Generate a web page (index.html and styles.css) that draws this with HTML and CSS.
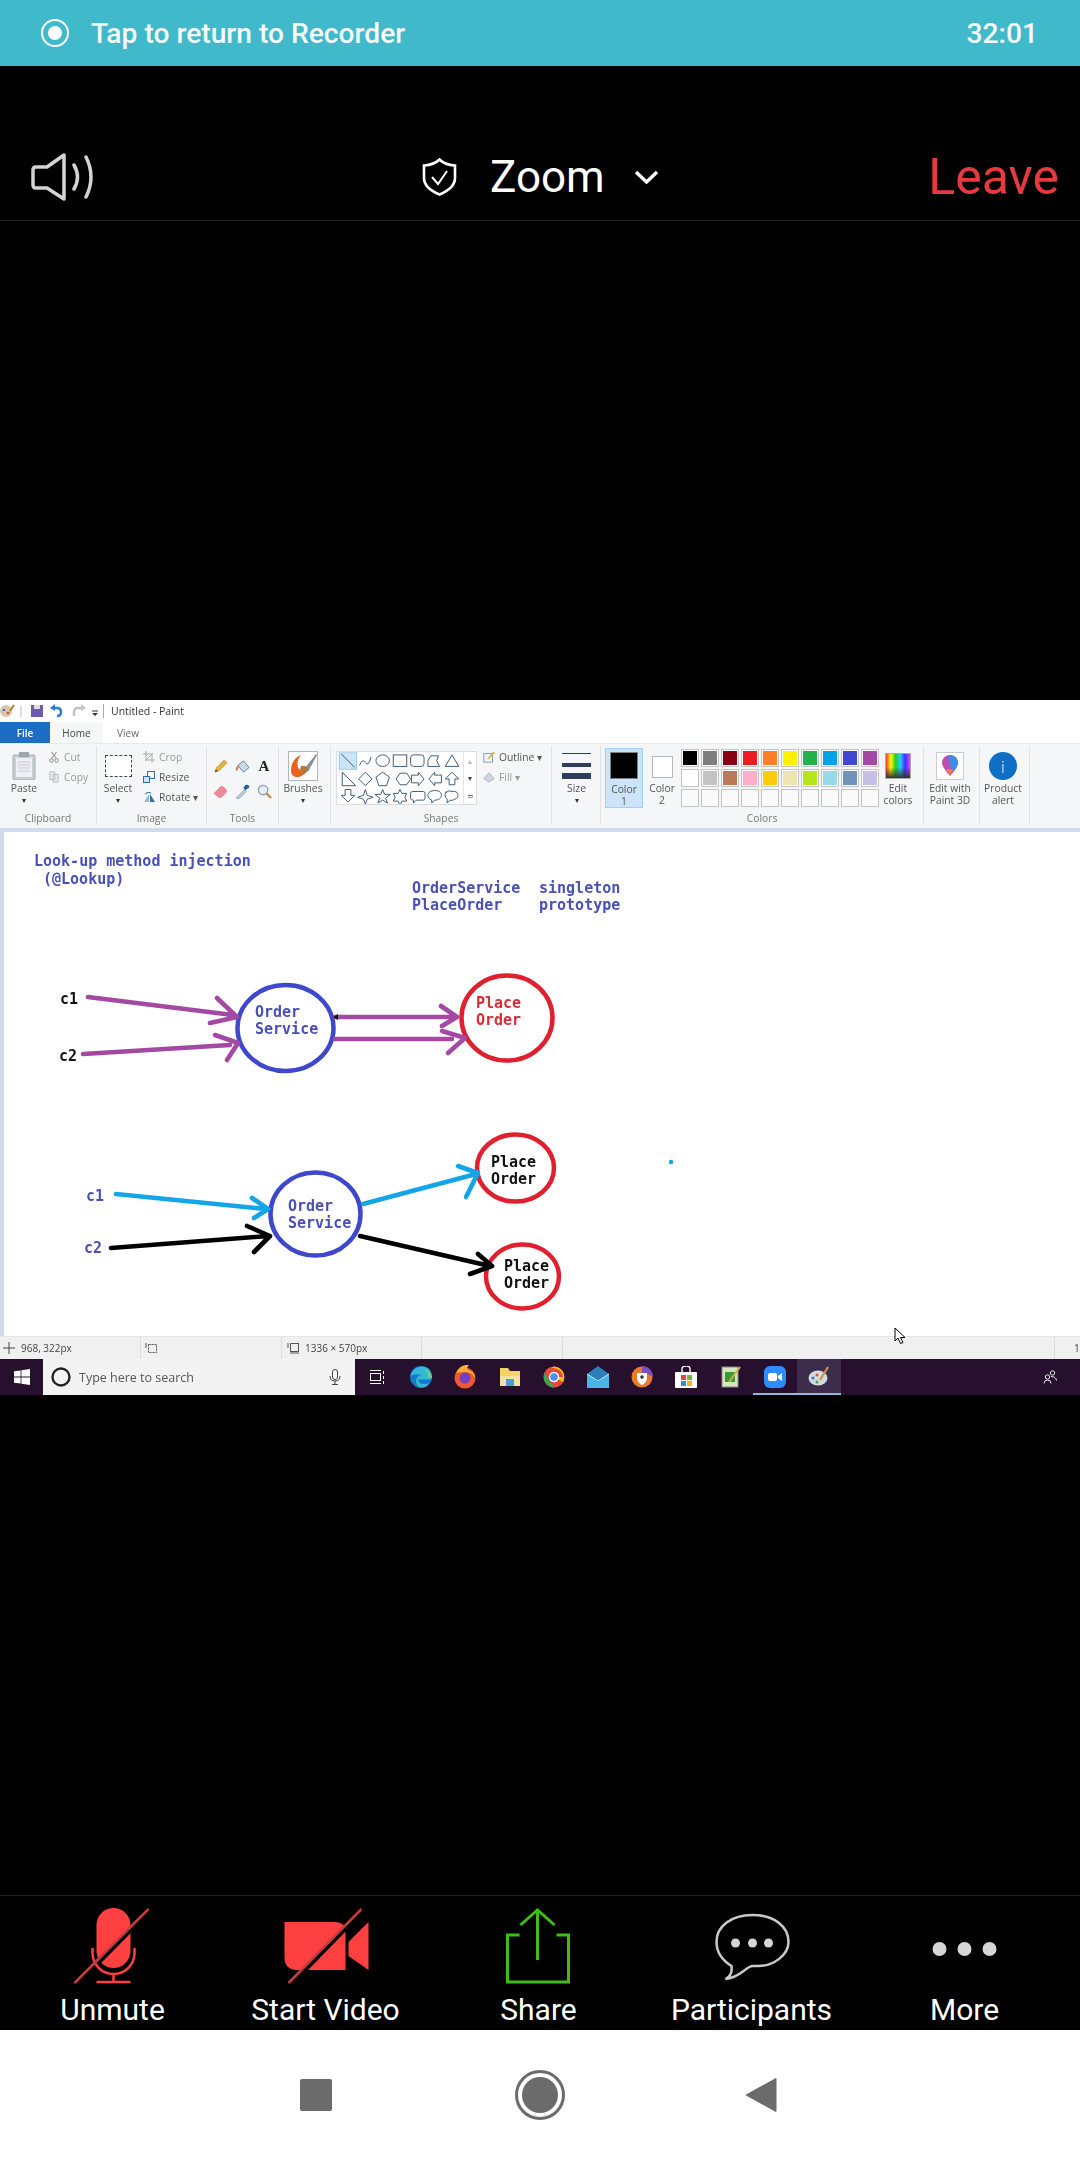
FILE: index.html
```html
<!DOCTYPE html>
<html lang="en">
<head>
<meta charset="utf-8">
<title>Zoom meeting</title>
<link rel="stylesheet" href="styles.css">
</head>
<body>
<div class="app">
  <div class="recorder-bar">
    <svg class="rec-icon" viewBox="0 0 28 28"><circle cx="14" cy="14" r="13" fill="none" stroke="#fff" stroke-width="2"/><circle cx="14" cy="14" r="7" fill="#fff"/></svg>
    <span class="rec-text">Tap to return to Recorder</span>
    <span class="rec-time">32:01</span>
  </div>

  <header class="meeting-head">
    <svg class="speaker" viewBox="0 0 63 48"><path d="M2 17q0-3 3-3h11L33 2v44L16 35H5q-3 0-3-3z" fill="none" stroke="#d4d4d4" stroke-width="3.500" stroke-linejoin="round"/><path d="M43 12q7 12 0 24M55 4q10 20 0 40" fill="none" stroke="#d4d4d4" stroke-width="3.500" stroke-linecap="round"/></svg>
    <div class="title">
      <svg class="shield" viewBox="0 0 35 38"><path d="M17.500 1.500C21 5 26 7 33 7.500V20C33 28 26 33 17.500 36.500 9 33 2 28 2 20V7.500C9 7 14 5 17.500 1.500z" fill="none" stroke="#fff" stroke-width="2.600"/><path d="M10 19l6 7 9-13" fill="none" stroke="#fff" stroke-width="2"/></svg>
      <span class="title-text">Zoom</span>
      <svg class="chev" viewBox="0 0 25 14"><path d="M2 2l10.500 10L23 2" fill="none" stroke="#fff" stroke-width="3.400"/></svg>
    </div>
    <span class="leave">Leave</span>
  </header>

  <main class="stage">
    <section class="paint">
      <div class="p-title">
        <svg class="qa" width="70" height="16" viewBox="0 0 70 16"><circle cx="6" cy="8" r="6" fill="#d9c7a8"/><circle cx="4" cy="7" r="1.300" fill="#3a7bd0"/><circle cx="8" cy="10" r="1.300" fill="#d04a3a"/><path d="M10 8l4-6" stroke="#b07a3a" stroke-width="2"/><path d="M21 3v11" stroke="#bbb"/><rect x="31" y="2" width="12" height="12" fill="#6d5bb0"/><rect x="34" y="2" width="6" height="4" fill="#ddd"/><path d="M52 5h5q4 0 4 4t-4 4" fill="none" stroke="#2b7cd3" stroke-width="2.500"/><path d="M55 1l-5 4 5 3z" fill="#2b7cd3"/></svg>
        <svg width="28" height="16" viewBox="0 0 28 16"><path d="M14 5H8q-4 0-4 4v4" fill="none" stroke="#c4c4c4" stroke-width="2.500"/><path d="M11 1l5 4-5 3z" fill="#c4c4c4"/><path d="M22 8h6" stroke="#333"/><path d="M22 10h6l-3 3z" fill="#333"/></svg>
        <span class="p-sep"></span>
        <span class="p-name">Untitled - Paint</span>
      </div>
      <div class="p-tabs">
        <span class="tab tab-file">File</span>
        <span class="tab tab-home">Home</span>
        <span class="tab tab-view">View</span>
      </div>
      <div class="ribbon">
        <div class="group g-clip">
          <div class="g-body">
            <div class="big w48">
              <div class="big-icon"><svg width="24" height="28" viewBox="0 0 24 28"><rect x="1" y="3" width="22" height="25" rx="1" fill="#c7ced6" stroke="#a9b0b8"/><rect x="4" y="6" width="16" height="19" fill="#eef0f3"/><path d="M6 10h12M6 13h12M6 16h12M6 19h12" stroke="#c2c8d0"/><rect x="7" y="0" width="10" height="5" fill="#9ea5ad"/></svg></div>
              <span class="lbl">Paste</span><span class="drop">▾</span>
            </div>
            <div class="rows">
              <div class="row off"><svg class="ri" viewBox="0 0 12 14"><path d="M3 1l6 8M9 1L3 9" stroke="#9a9a9a" stroke-width="1.300" fill="none"/><circle cx="3" cy="11" r="2" fill="none" stroke="#9a9a9a" stroke-width="1.200"/><circle cx="9" cy="11" r="2" fill="none" stroke="#9a9a9a" stroke-width="1.200"/></svg>Cut</div>
              <div class="row off"><svg class="ri" viewBox="0 0 12 14"><path d="M1 1h6v9H1zM5 4h6v9H5z" fill="#e6e6e6" stroke="#b9b9b9"/></svg>Copy</div>
            </div>
          </div>
          <div class="g-label">Clipboard</div>
        </div>
        <div class="group g-image">
          <div class="g-body">
            <div class="big w42">
              <div class="big-icon"><span class="select-box"></span></div>
              <span class="lbl">Select</span><span class="drop">▾</span>
            </div>
            <div class="rows rows-pad">
              <div class="row off"><svg class="ri" viewBox="0 0 12 12"><path d="M3 0v9h9M0 3h9v9" fill="none" stroke="#a9a9a9"/><path d="M2 10L10 2" stroke="#a9a9a9"/></svg>Crop</div>
              <div class="row"><svg class="ri" viewBox="0 0 12 12"><rect x="4.500" y="0.500" width="7" height="7" fill="#fff" stroke="#2d6fb0"/><rect x="0.500" y="5.500" width="6" height="6" fill="#cfe3f7" stroke="#2d6fb0"/></svg>Resize</div>
              <div class="row"><svg class="ri" viewBox="0 0 12 12"><path d="M6 3v8H1z" fill="#9fb4c8"/><path d="M7 3v8h5z" fill="#2d6fb0"/><path d="M2 3q3-3 6-1" fill="none" stroke="#2d6fb0"/></svg>Rotate ▾</div>
            </div>
          </div>
          <div class="g-label">Image</div>
        </div>
        <div class="group g-tools">
          <div class="g-body">
            <div class="tool-grid">
              <svg class="tg" viewBox="0 0 16 16"><path d="M2 14l2-5 8-8 3 3-8 8z" fill="#e8b33f" stroke="#a8782a" stroke-width=".6"/><path d="M2 14l1-3 2 2z" fill="#444"/></svg>
              <svg class="tg" viewBox="0 0 16 16"><path d="M3 7l6-5 6 7-6 5z" fill="#cfd8e4" stroke="#5e7fa3"/><path d="M4 6Q0 9 1 13q3-2 3-7z" fill="#e0703a"/></svg>
              <span class="tg-a">A</span>
              <svg class="tg" viewBox="0 0 16 16"><path d="M1 10l7-7q2-1 3 0l3 3q1 1 0 3l-5 5q-2 1-3 0z" fill="#ec8a9a" stroke="#c26a78" stroke-width=".5"/></svg>
              <svg class="tg" viewBox="0 0 16 16"><path d="M2 14l8-8 2 2-8 8H2z" fill="#bcd" stroke="#789" stroke-width=".6"/><path d="M9 4l2-3q3-1 4 1t-2 3l-2 2z" fill="#2a5f9e"/></svg>
              <svg class="tg" viewBox="0 0 16 16"><circle cx="6.500" cy="6.500" r="5" fill="#e6eef6" stroke="#8a9aaa" stroke-width="1.300"/><path d="M10 10l5 5" stroke="#c58f4a" stroke-width="2.400"/></svg>
            </div>
          </div>
          <div class="g-label">Tools</div>
        </div>
        <div class="group g-brush">
          <div class="g-body">
            <div class="big w48">
              <div class="big-icon"><svg width="30" height="30" viewBox="0 0 30 30"><rect x=".5" y=".5" width="29" height="29" fill="#fff" stroke="#b5b5b5"/><path d="M3 20Q3 8 13 4q-6 8-2 14 4 4 9 1-6 8-12 7-5-1-5-6z" fill="#e8641f"/><path d="M17 17L28 3l1 1-9 17z" fill="#8a8f96"/><path d="M13 15q5-1 7 3-1 5-6 5-3-4-1-8z" fill="#b07a3a"/></svg></div>
              <span class="lbl">Brushes</span><span class="drop">▾</span>
            </div>
          </div>
          <div class="g-label"></div>
        </div>
        <div class="group g-shapes">
          <div class="g-body">
            <div class="gallery">
              <svg class="gallery-svg" viewBox="0 0 126 54" fill="none" stroke="#3b5a76">
                <rect x="0" y="0" width="18" height="18" fill="#cce4f7" stroke="#9cc7ea"/>
                <path d="M2 2l14 14"/><path d="M21 14q3-8 6-3t6-6"/><ellipse cx="45" cy="9" rx="7" ry="6"/><rect x="56" y="3" width="14" height="12"/><rect x="74" y="3" width="14" height="12" rx="3"/><path d="M92 15V9l3-5h8l-2 5 3 6z"/><path d="M110 15l7-12 7 12z"/>
                <path d="M3 21v14h14z"/><path d="M27 21l7 7-7 7-7-7z"/><path d="M45 21l7 5-3 9h-8l-3-9z"/><path d="M59 28l4-6h7l4 6-4 6h-7z"/><path d="M75 24h7v-3l6 7-6 7v-3h-7z"/><path d="M106 24h-7v-3l-6 7 6 7v-3h7z"/><path d="M117 21l7 7h-4v6h-6v-6h-4z"/>
                <path d="M6 39h6v6h4l-7 7-7-7h4z"/><path d="M27 39l2 6 6 2-6 2-2 5-2-5-6-2 6-2z"/><path d="M45 39l2 5h6l-5 4 2 5-5-3-5 3 2-5-5-4h6z"/><path d="M63 39l2 4h5l-2 4 2 4h-5l-2 4-2-4h-5l2-4-2-4h5z"/><path d="M76 41h11q2 0 2 2v5q0 2-2 2h-7l-3 3v-3q-3 0-3-2v-5q0-2 2-2z"/><path d="M99 40c5 0 7 2 7 5s-3 5-7 5l-3 3v-3c-3-1-4-3-4-5 0-3 3-5 7-5z"/><path d="M111 42q3-3 6-1 5-1 6 3 1 4-3 5-3 2-5 1l-3 3v-4q-4-3-1-8z"/>
              </svg>
              <div class="gallery-scroll"><span>▴</span><span class="dark">▾</span><span class="dark">≂</span></div>
            </div>
            <div class="rows outline-rows">
              <div class="row"><svg class="ri" viewBox="0 0 14 14"><rect x="1" y="3" width="10" height="10" fill="none" stroke="#6c93b8"/><path d="M5 9l7-8 2 1-8 8z" fill="#e2a83a"/></svg>Outline ▾</div>
              <div class="row off"><svg class="ri" viewBox="0 0 14 14"><path d="M1 9l6-7 6 7-6 4z" fill="#cfd6de" stroke="#a9b3bd"/></svg>Fill ▾</div>
            </div>
          </div>
          <div class="g-label">Shapes</div>
        </div>
        <div class="group g-size">
          <div class="g-body">
            <div class="big w49">
              <div class="big-icon"><span class="size-lines"><i class="s1"></i><i class="s2"></i><i class="s3"></i></span></div>
              <span class="lbl">Size</span><span class="drop">▾</span>
            </div>
          </div>
          <div class="g-label"></div>
        </div>
        <div class="group g-colors">
          <div class="g-body">
            <div class="color-btn active">
              <span class="chip chip-black"></span>
              <span class="lbl">Color<br>1</span>
            </div>
            <div class="color-btn">
              <span class="chip-slot"><span class="chip chip-white"></span></span>
              <span class="lbl">Color<br>2</span>
            </div>
            <div class="palette">
              <i class="c-black"></i><i class="c-gray"></i><i class="c-maroon"></i><i class="c-red"></i><i class="c-orange"></i><i class="c-yellow"></i><i class="c-green"></i><i class="c-sky"></i><i class="c-indigo"></i><i class="c-purple"></i>
              <i class="c-white"></i><i class="c-silver"></i><i class="c-brown"></i><i class="c-pink"></i><i class="c-gold"></i><i class="c-cream"></i><i class="c-lime"></i><i class="c-aqua"></i><i class="c-steel"></i><i class="c-lav"></i>
              <i></i><i></i><i></i><i></i><i></i><i></i><i></i><i></i><i></i><i></i>
            </div>
            <div class="big w38">
              <div class="big-icon"><span class="spectrum"></span></div>
              <span class="lbl">Edit<br>colors</span>
            </div>
          </div>
          <div class="g-label">Colors</div>
        </div>
        <div class="group g-p3d">
          <div class="g-body">
            <div class="big w52">
              <div class="big-icon"><svg width="28" height="28" viewBox="0 0 28 28"><rect x=".5" y=".5" width="27" height="27" fill="#fff" stroke="#ccc"/><path d="M14 24Q6 15 6 11a8 8 0 0 1 16 0q0 4-8 13z" fill="#c24bb0"/><path d="M14 3a8 8 0 0 1 8 8q0 3-4 8-5-4-6-15z" fill="#3f8fe0"/><path d="M14 24l-4-7h7z" fill="#e8833a"/></svg></div>
              <span class="lbl">Edit with<br>Paint 3D</span>
            </div>
          </div>
          <div class="g-label"></div>
        </div>
        <div class="group g-alert">
          <div class="g-body">
            <div class="big w46">
              <div class="big-icon"><span class="info">i</span></div>
              <span class="lbl">Product<br>alert</span>
            </div>
          </div>
          <div class="g-label"></div>
        </div>
      </div>
      <div class="canvas">
        <svg class="drawing" viewBox="4 832 1076 504" width="1076" height="504">
          <g class="t-blue">
            <text x="34" y="866">Look-up method injection</text>
            <text x="43" y="884">(@Lookup)</text>
            <text x="412" y="893">OrderService</text>
            <text x="412" y="910">PlaceOrder</text>
            <text x="539" y="893">singleton</text>
            <text x="539" y="910">prototype</text>
            <text x="255" y="1017">Order</text>
            <text x="255" y="1034">Service</text>
            <text x="86" y="1201">c1</text>
            <text x="84" y="1253">c2</text>
            <text x="288" y="1211">Order</text>
            <text x="288" y="1228">Service</text>
          </g>
          <g class="t-black">
            <text x="60" y="1004">c1</text>
            <text x="59" y="1061">c2</text>
            <text x="491" y="1167">Place</text>
            <text x="491" y="1184">Order</text>
            <text x="504" y="1271">Place</text>
            <text x="504" y="1288">Order</text>
          </g>
          <g class="t-red">
            <text x="476" y="1008">Place</text>
            <text x="476" y="1025">Order</text>
          </g>
          <g class="ring ring-blue">
            <ellipse cx="285.500" cy="1028" rx="48" ry="43"/>
            <ellipse cx="315.500" cy="1214" rx="45" ry="41.500"/>
          </g>
          <g class="ring ring-red">
            <ellipse cx="507" cy="1018" rx="45.500" ry="42.500"/>
            <ellipse cx="515.500" cy="1168" rx="38.500" ry="33.500"/>
            <ellipse cx="522.500" cy="1276.500" rx="36.500" ry="32"/>
          </g>
          <g class="pen pen-purple">
            <path d="M88 997L233 1015M217 998L237 1017 210 1023"/>
            <path d="M83 1054L230 1045M215 1035L238 1043 227 1060"/>
            <path d="M335 1017H455M441 1006L457 1017 442 1026"/>
            <path d="M335 1039H452M442 1031L465 1038 448 1053"/>
          </g>
          <path class="cursor-tip" d="M333 1017l5-3v6z"/>
          <g class="pen pen-sky">
            <path d="M116 1194L266 1209M252 1198L268 1209 254 1218"/>
            <path d="M363 1204L476 1174M458 1166L478 1173 466 1197"/>
          </g>
          <g class="pen pen-black">
            <path d="M111 1248L268 1236M247 1226L270 1236 254 1252"/>
            <path d="M360 1236L490 1266M478 1254L492 1266 470 1274"/>
          </g>
          <circle class="dot" cx="671" cy="1162" r="2.200"/>
        </svg>
      </div>
      <div class="p-status">
        <div class="st st1"><svg class="st-ic" viewBox="0 0 12 12"><path d="M6 0v12M0 6h12" stroke="#444"/></svg>968, 322px</div>
        <div class="st st2"><svg class="st-ic" viewBox="0 0 12 12"><rect x="3.500" y="2.500" width="8" height="8" fill="none" stroke="#555" stroke-dasharray="2 1"/><path d="M1 1v5" stroke="#555"/></svg></div>
        <div class="st st3"><svg class="st-ic" viewBox="0 0 12 12"><rect x="3.500" y="1.500" width="8" height="8" fill="none" stroke="#555"/><path d="M1 1v5M3 11h9" stroke="#555"/></svg>1336 × 570px</div>
        <div class="st st4"></div>
        <div class="st st5"></div>
        <div class="st st6">1</div>
      </div>
      <div class="taskbar">
        <div class="tb-start"><svg width="16" height="16" viewBox="0 0 16 16" fill="#fff"><path d="M0 2.300L6.600 1.400V7.600H0zM7.400 1.300L16 0V7.600H7.400zM0 8.400H6.600V14.600L0 13.700zM7.400 8.400H16V16L7.400 14.700z"/></svg></div>
        <div class="tb-search">
          <svg width="20" height="20" viewBox="0 0 20 20"><circle cx="10" cy="10" r="8.500" fill="none" stroke="#222" stroke-width="2.400"/></svg>
          <span class="tb-hint">Type here to search</span>
          <svg class="tb-mic" width="12" height="16" viewBox="0 0 12 16"><rect x="3.500" y="0.500" width="5" height="10" rx="2.500" fill="#fff" stroke="#444"/><path d="M1 7q0 5 5 5t5-5M6 12v3M3 15.500h6" fill="none" stroke="#444"/></svg>
        </div>
        <div class="tb-app"><svg width="16" height="16" viewBox="0 0 16 16" fill="none" stroke="#fff"><rect x="1.500" y="4.500" width="10" height="7"/><path d="M1 1.500h11M1 14.500h11M14.500 2v3M14.500 7v3M14.500 12v3"/></svg></div>
        <div class="tb-app"><svg width="24" height="24" viewBox="0 0 24 24"><circle cx="12" cy="12" r="11" fill="#1479c9"/><path d="M1.500 11Q4 2 13 1.500q9 0 10 10 0 3-3 3H9q1 5 7 4.500 2 0 4-1-3 5-9 4.500Q7 21 7 15q1-5 6-5-7-2-11.500 1z" fill="#35b8d8"/><path d="M23 13q-1-8-9-9 6 3 5 9z" fill="#5fd38a"/></svg></div>
        <div class="tb-app"><svg width="22" height="24" viewBox="0 0 22 24"><circle cx="11" cy="13" r="10.500" fill="#f0582e"/><path d="M2 8q4-9 13-8-3 3-1 5 6 1 7 8-3-6-9-6-7 0-10 1z" fill="#ffb02e"/><circle cx="11" cy="13" r="5.500" fill="#7a3fc0"/></svg></div>
        <div class="tb-app"><svg width="22" height="20" viewBox="0 0 22 20"><path d="M1 1h8l2 3h10v15H1z" fill="#f6d365"/><rect x="1" y="9" width="20" height="10" fill="#f3e2a0"/><rect x="7" y="12" width="8" height="7" fill="#4a9ed8"/></svg></div>
        <div class="tb-app"><svg width="22" height="22" viewBox="0 0 22 22"><circle cx="11" cy="11" r="10.500" fill="#e8453c"/><path d="M11 .5A10.500 10.500 0 0 1 20 16L11 11H20A10 10 0 0 0 3 5z" fill="#f4c20d"/><path d="M1.500 7L7 16l5 5.500A10.500 10.500 0 0 1 1.500 7z" fill="#34a853"/><circle cx="11" cy="11" r="4.500" fill="#4a8cf0" stroke="#fff" stroke-width="1.500"/></svg></div>
        <div class="tb-app"><svg width="22" height="22" viewBox="0 0 22 22"><path d="M0 8L11 0l11 8v14H0z" fill="#2c7fb8"/><path d="M0 8l11 8 11-8v14H0z" fill="#4ab6e8"/><path d="M0 8l11 7 11-7" fill="none" stroke="#cdeafa"/></svg></div>
        <div class="tb-app"><svg width="22" height="22" viewBox="0 0 22 22"><circle cx="11" cy="11" r="10.500" fill="#e87a2a"/><path d="M11 0a11 11 0 0 1 11 11q-6-4-11-4z" fill="#7a4fc0"/><path d="M6 7h10v6q-1 4-5 6-4-2-5-6z" fill="#fff"/><circle cx="11" cy="11" r="1.800" fill="#333"/></svg></div>
        <div class="tb-app"><svg width="22" height="22" viewBox="0 0 22 22"><path d="M7 6V3q0-3 4-3t4 3v3" fill="none" stroke="#eee" stroke-width="1.500"/><rect y="6" width="22" height="16" rx="1" fill="#fff"/><rect x="6" y="9" width="5" height="5" fill="#e8453c"/><rect x="12" y="9" width="5" height="5" fill="#7bb727"/><rect x="6" y="15" width="5" height="5" fill="#2b8fd8"/><rect x="12" y="15" width="5" height="5" fill="#f4b400"/></svg></div>
        <div class="tb-app"><svg width="20" height="22" viewBox="0 0 20 22"><rect x="1" y="1" width="16" height="20" fill="#d8e6c0" stroke="#888"/><rect x="4" y="6" width="10" height="10" fill="#3a9a3a"/><path d="M8 16L19 1" stroke="#d8b040" stroke-width="2"/></svg></div>
        <div class="tb-app tb-zoom"><svg width="22" height="22" viewBox="0 0 22 22"><rect width="22" height="22" rx="6" fill="#2d8cff"/><rect x="4" y="7" width="9" height="8" rx="2" fill="#fff"/><path d="M14 10l4-3v8l-4-3z" fill="#fff"/></svg></div>
        <div class="tb-app tb-active"><svg width="22" height="22" viewBox="0 0 22 22"><ellipse cx="10" cy="13" rx="9.500" ry="7.500" fill="#d5d9e0"/><circle cx="5" cy="13" r="1.600" fill="#3a7bd0"/><circle cx="9" cy="10" r="1.500" fill="#e0503a"/><circle cx="9" cy="17" r="1.500" fill="#4aa84a"/><path d="M12 15L20 2" stroke="#c8964a" stroke-width="2.200"/></svg></div>
        <div class="tb-people"><svg width="14" height="14" viewBox="0 0 14 14" fill="none" stroke="#e8e8e8"><circle cx="4.500" cy="7" r="2.200"/><path d="M1 13.500q0-3.500 3.500-3.500T8 13.500"/><circle cx="9.500" cy="3" r="2.200"/><path d="M8 6.500q5 0 5.500 4"/></svg></div>
      </div>
      <svg class="cursor" width="12" height="18" viewBox="0 0 12 18"><path d="M1 1v13l3-3 2.500 5.500 2.500-1L6.500 10.500H11z" fill="#fff" stroke="#000"/></svg>
    </section>
  </main>

  <nav class="toolbar">
    <div class="tool">
      <svg class="tool-icon" viewBox="62.500 1900 100 90">
        <rect class="red" x="96" y="1908" width="34" height="60" rx="17"/>
        <path class="cut" d="M74 1987L154 1906"/>
        <path class="red-stroke" d="M92 1948v5a21 21 0 0 0 42 0v-5M113 1974v8M96 1982h34"/>
        <path class="red-line" d="M74 1983L148 1909"/>
      </svg>
      <span class="tool-label">Unmute</span>
    </div>
    <div class="tool">
      <svg class="tool-icon" viewBox="275.500 1900 100 90">
        <path class="red" d="M284 1922h50q11 0 11 11v37h-48q-13 0-13-13z"/>
        <path class="red" d="M348 1942l20-20v48l-20-14z"/>
        <path class="cut" d="M288 1987L367 1906"/>
        <path class="red-line" d="M288 1983L361 1909"/>
      </svg>
      <span class="tool-label">Start Video</span>
    </div>
    <div class="tool">
      <svg class="tool-icon" viewBox="488.500 1900 100 90">
        <path class="green" d="M519 1935h-12v47h61v-47h-12M537 1960v-49M520 1925l17-15 17 15"/>
      </svg>
      <span class="tool-label">Share</span>
    </div>
    <div class="tool">
      <svg class="tool-icon" viewBox="701.500 1900 100 90">
        <path class="bubble" d="M752 1915c21 0 36 11 36 27 0 13-15 24-30 24h-6c-6 0-13 12-27 13 4-2 7-6 6-13-8-5-15-13-15-24 0-16 15-27 36-27z"/>
        <circle class="pale" cx="735" cy="1943" r="4.500"/><circle class="pale" cx="752" cy="1943" r="4.500"/><circle class="pale" cx="768" cy="1943" r="4.500"/>
      </svg>
      <span class="tool-label">Participants</span>
    </div>
    <div class="tool">
      <svg class="tool-icon" viewBox="914.500 1900 100 90">
        <circle class="pale" cx="939" cy="1949" r="7"/><circle class="pale" cx="964" cy="1949" r="7"/><circle class="pale" cx="989" cy="1949" r="7"/>
      </svg>
      <span class="tool-label">More</span>
    </div>
  </nav>

  <div class="android-nav">
    <span class="nav-square"></span>
    <svg class="nav-home" viewBox="0 0 50 50"><circle cx="25" cy="25" r="23.500" fill="none" stroke="#6b6b6b" stroke-width="3"/><circle cx="25" cy="25" r="18" fill="#6b6b6b"/></svg>
    <svg class="nav-back" viewBox="0 0 32 36"><path d="M31 1.500v33L1 18z" fill="#6b6b6b" stroke="#6b6b6b" stroke-linejoin="round" stroke-width="1"/></svg>
  </div>
</div>
</body>
</html>
```
FILE: styles.css
```css
* { box-sizing: border-box; }
html, body { margin: 0; padding: 0; background: #000; }
.app {
  width: 1080px; height: 2160px; overflow: hidden;
  display: flex; flex-direction: column;
  background: #000; color: #fff;
  font-family: Roboto, "Liberation Sans", sans-serif;
}

/* recorder bar */
.recorder-bar {
  height: 66px; flex: none; background: #40b9cb;
  display: flex; align-items: center; padding: 0 42px 0 41px;
}
.rec-icon { width: 28px; height: 28px; margin-right: 22px; }
.rec-text { font-size: 28.200px; font-weight: 500; color: #f3fbfc; }
.rec-time { font-size: 28.200px; font-weight: 500; margin-left: auto; color: #f3fbfc; }

/* header */
.meeting-head {
  height: 155px; flex: none; padding: 68px 21px 0 31px;
  border-bottom: 1px solid #1f1f1f;
  display: flex; align-items: center;
}
.speaker { width: 63px; height: 48px; flex: none; }
.title { display: flex; align-items: center; margin-left: 328px; }
.shield { width: 35px; height: 38px; margin-right: 33px; }
.title-text { font-size: 44px; margin-right: 29px; }
.chev { width: 25px; height: 14px; }
.leave { margin-left: auto; font-size: 50px; font-weight: 400; color: #e8393f; }

/* stage and paint capture */
.stage { flex: 1; padding-top: 479px; min-height: 0; }
.paint {
  position: relative; height: 695px; background: #fff;
  font-family: "Open Sans", "Liberation Sans", sans-serif; color: #444;
  filter: blur(.5px); overflow: hidden;
}
.p-title { height: 22px; display: flex; align-items: center; font-size: 11px; }
.qa { margin-left: 0; }
.p-sep { width: 1px; height: 14px; background: #aaa; margin: 0 7px 0 5px; }
.p-name { color: #333; font-size: 10.500px; }
.p-tabs { height: 21px; display: flex; font-size: 10px; }
.tab { display: flex; align-items: center; justify-content: center; height: 21px; }
.tab-file { width: 50px; background: #1c6ec4; color: #fff; font-weight: 600; }
.tab-home { width: 53px; background: #f5f6f7; color: #444; }
.tab-view { width: 50px; color: #666; }

.ribbon {
  height: 85px; display: flex; background: #f5f6f7;
  border-top: 1px solid #e8e9ea; padding-bottom: 3px;
  font-size: 10.300px; color: #555;
}
.group { display: flex; flex-direction: column; border-right: 1px solid #e1e2e3; margin-top: 2px; }
.g-body { height: 66px; display: flex; }
.g-label { height: 14px; line-height: 14px; text-align: center; color: #777; font-size: 10.300px; }
.g-clip { width: 97px; }
.g-image { width: 110px; }
.g-tools { width: 72px; }
.g-brush { width: 52px; }
.g-shapes { width: 221px; }
.g-size { width: 49px; }
.g-colors { width: 323px; }
.g-p3d { width: 56px; }
.g-alert { width: 50px; }

.big { display: flex; flex-direction: column; align-items: center; padding-top: 4px; flex: none; }
.big-icon { height: 32px; display: flex; align-items: center; justify-content: center; }
.lbl { line-height: 12px; text-align: center; }
.drop { line-height: 12px; font-size: 8px; color: #333; }
.w48 { width: 48px; }
.w42 { width: 42px; }
.w49 { width: 49px; }
.w38 { width: 38px; }
.w52 { width: 52px; }
.w46 { width: 46px; }

.rows { display: flex; flex-direction: column; padding-top: 1px; }
.rows-pad { padding-left: 4px; }
.outline-rows { padding-left: 6px; }
.row { height: 20px; display: flex; align-items: center; gap: 4px; color: #555; white-space: nowrap; }
.row.off { color: #9a9a9a; }
.ri { width: 12px; height: 12px; flex: none; }

.select-box { width: 27px; height: 22px; border: 1px dashed #444; background: #fff; }

.tool-grid {
  padding: 8px 0 0 2px;
  display: grid; grid-template-columns: repeat(3, 22px); grid-auto-rows: 25px;
  place-items: center; align-content: start;
}
.tg { width: 15px; height: 15px; }
.tg-a { font-family: "Liberation Serif", serif; font-weight: 700; font-size: 15px; color: #222; }

.gallery {
  margin: 5px 0 0 5px; width: 141px; height: 54px; flex: none;
  background: #fff; border: 1px solid #dcdde0; display: flex;
}
.gallery-svg { width: 126px; height: 52px; display: block; }
.gallery-scroll {
  flex: 1; border-left: 1px solid #e4e4e4; display: flex; flex-direction: column;
  align-items: center; justify-content: space-around; font-size: 8px; color: #bbb;
}
.gallery-scroll .dark { color: #444; }

.size-lines { width: 29px; display: flex; flex-direction: column; }
.size-lines i { display: block; background: #2c3e5a; }
.s1 { height: 1px; margin-bottom: 9px; }
.s2 { height: 4px; margin-bottom: 6px; }
.s3 { height: 6px; }

.color-btn {
  width: 38px; height: 60px; flex: none; margin-top: 2px;
  display: flex; flex-direction: column; align-items: center;
}
.color-btn.active {
  margin-left: 4px; padding-top: 3px;
  background: #cce4f7; border: 1px solid #a8cdee;
}
.chip { display: block; flex: none; }
.chip-black { width: 28px; height: 27px; background: #000; border: 1px solid #808080; margin-bottom: 4px; }
.chip-slot { height: 34px; display: flex; align-items: center; padding-top: 3px; flex: none; }
.chip-white { width: 21px; height: 22px; background: #fff; border: 1px solid #b5b5b5; }
.palette {
  width: 198px; height: 58px; flex: none; margin-top: 3px;
  display: grid; grid-template-columns: repeat(10, 18px); grid-auto-rows: 18px; gap: 2px;
}
.palette i { display: block; background: #fafafa; border: 1px solid #c4c4c4; }
.palette .c-black { background: #000; box-shadow: inset 0 0 0 1px #fff; }
.palette .c-gray { background: #7f7f7f; box-shadow: inset 0 0 0 1px #fff; }
.palette .c-maroon { background: #880015; box-shadow: inset 0 0 0 1px #fff; }
.palette .c-red { background: #ed1c24; box-shadow: inset 0 0 0 1px #fff; }
.palette .c-orange { background: #ff7f27; box-shadow: inset 0 0 0 1px #fff; }
.palette .c-yellow { background: #fff200; box-shadow: inset 0 0 0 1px #fff; }
.palette .c-green { background: #22b14c; box-shadow: inset 0 0 0 1px #fff; }
.palette .c-sky { background: #00a2e8; box-shadow: inset 0 0 0 1px #fff; }
.palette .c-indigo { background: #3f48cc; box-shadow: inset 0 0 0 1px #fff; }
.palette .c-purple { background: #a349a4; box-shadow: inset 0 0 0 1px #fff; }
.palette .c-white { background: #fff; }
.palette .c-silver { background: #c3c3c3; box-shadow: inset 0 0 0 1px #fff; }
.palette .c-brown { background: #b97a57; box-shadow: inset 0 0 0 1px #fff; }
.palette .c-pink { background: #ffaec9; box-shadow: inset 0 0 0 1px #fff; }
.palette .c-gold { background: #ffc90e; box-shadow: inset 0 0 0 1px #fff; }
.palette .c-cream { background: #efe4b0; box-shadow: inset 0 0 0 1px #fff; }
.palette .c-lime { background: #b5e61d; box-shadow: inset 0 0 0 1px #fff; }
.palette .c-aqua { background: #99d9ea; box-shadow: inset 0 0 0 1px #fff; }
.palette .c-steel { background: #7092be; box-shadow: inset 0 0 0 1px #fff; }
.palette .c-lav { background: #c8bfe7; box-shadow: inset 0 0 0 1px #fff; }
.spectrum {
  width: 26px; height: 26px; border: 1px solid #aaa; display: block;
  background: linear-gradient(#0000 55%, #333), linear-gradient(90deg, #f33, #ff0, #2c2, #2cf, #33f, #f3f);
}
.info {
  width: 28px; height: 28px; border-radius: 50%; background: #0f6fc6; color: #fff;
  display: flex; align-items: center; justify-content: center; font-size: 17px; font-weight: 300;
}

.canvas {
  height: 508px; background: #fff;
  border-left: 4px solid #d2daec; border-top: 4px solid #d2daec;
}
.drawing { display: block; }
.drawing text {
  font-family: "DejaVu Sans Mono", "Liberation Mono", monospace;
  font-size: 15px; font-weight: 700; white-space: pre;
}
.t-blue text { fill: #4a50b8; }
.t-black text { fill: #111; }
.t-red text { fill: #dc2a38; }
.ring ellipse { fill: none; stroke-width: 4.500; }
.ring-blue ellipse { stroke: #3f48cc; }
.ring-red ellipse { stroke: #e0202e; }
.pen path { fill: none; stroke-width: 4.600; stroke-linecap: round; stroke-linejoin: round; }
.pen-purple path { stroke: #a349a4; }
.pen-sky path { stroke: #14a5e8; }
.pen-black path { stroke: #000; }
.cursor-tip { fill: #111; }
.dot { fill: #14a5e8; }

.p-status {
  height: 23px; display: flex; background: #f0f0f0;
  border-top: 1px solid #e6e6e6; font-size: 10px; color: #444;
}
.st { display: flex; align-items: center; gap: 6px; padding-left: 3px; border-right: 1px solid #dcdcdc; flex: none; }
.st-ic { width: 12px; height: 12px; flex: none; }
.st1 { width: 141px; }
.st2 { width: 141px; padding-left: 4px; }
.st3 { width: 140px; padding-left: 5px; }
.st4 { width: 141px; }
.st5 { width: 492px; }
.st6 { border-right: 0; padding-left: 19px; }

.taskbar { height: 36px; display: flex; align-items: center; background: #26102e; }
.tb-start { width: 43px; display: flex; justify-content: center; flex: none; }
.tb-search {
  width: 312px; height: 36px; flex: none; background: #f3f3f3;
  display: flex; align-items: center; padding: 0 14px 0 8px; gap: 8px;
}
.tb-hint { font-size: 12.500px; color: #555; }
.tb-mic { margin-left: auto; }
.tb-app { width: 44.200px; height: 36px; flex: none; display: flex; align-items: center; justify-content: center; }
.tb-zoom { box-shadow: inset 0 -2px 0 #8db9dc; }
.tb-active { background: #3d2c4c; border-bottom: 2px solid #8db9dc; }
.tb-people { margin-left: auto; margin-right: 23px; display: flex; }
.cursor { position: absolute; left: 894px; top: 627px; }

/* meeting toolbar */
.toolbar {
  height: 135px; flex: none; padding: 4px 9px 0 6px;
  border-top: 1px solid #1f1f1f;
  display: flex;
}
.tool { width: 213px; display: flex; flex-direction: column; align-items: center; }
.tool-icon { width: 100px; height: 90px; display: block; flex: none; }
.tool-label { font-size: 30px; line-height: 34px; color: #fff; margin-top: 3px; white-space: nowrap; }
.red { fill: #ff4040; }
.red-stroke { fill: none; stroke: #ff4040; stroke-width: 2.500; }
.red-line { fill: none; stroke: #c93a3c; stroke-width: 2.500; }
.cut { fill: none; stroke: #000; stroke-width: 4; }
.green { fill: none; stroke: #3fbd14; stroke-width: 3; }
.bubble { fill: none; stroke: #c9c9c9; stroke-width: 2.500; }
.pale { fill: #d6d6d6; }

/* android navigation */
.android-nav {
  height: 130px; flex: none; background: #fff;
  display: flex; align-items: center; padding-left: 300px;
}
.nav-square { width: 32px; height: 32px; border-radius: 2px; background: #6b6b6b; }
.nav-home { width: 50px; height: 50px; margin-left: 183px; }
.nav-back { width: 32px; height: 36px; margin-left: 180px; }
```
